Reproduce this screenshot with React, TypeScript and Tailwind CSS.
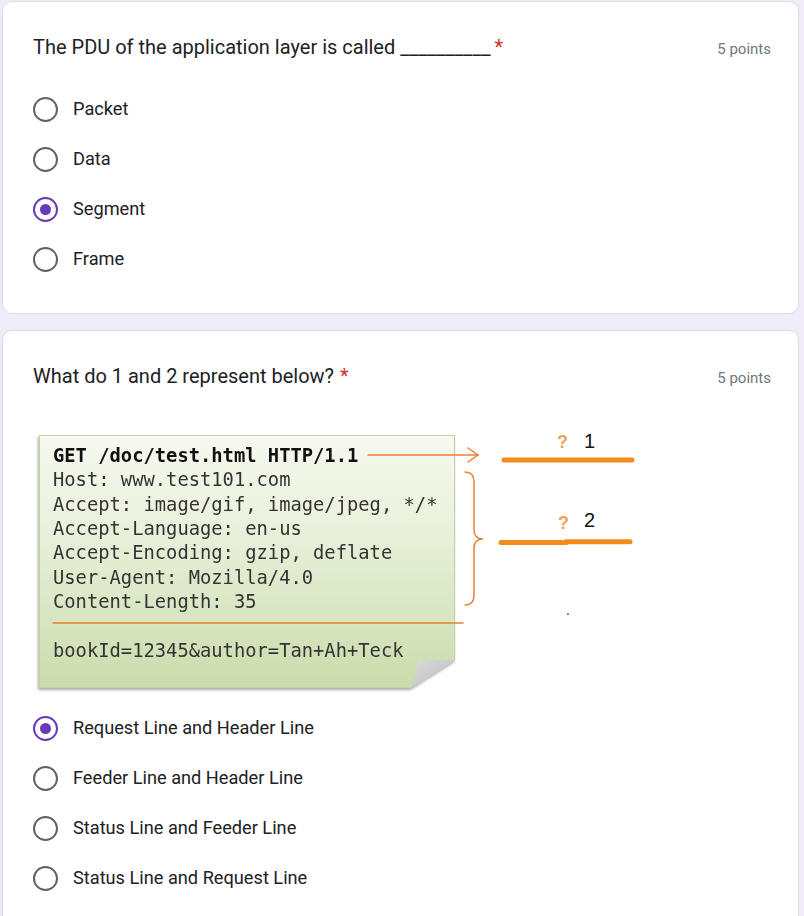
import React from "react";

const PDU_OPTIONS = ["Packet", "Data", "Segment", "Frame"];
const HTTP_OPTIONS = [
  "Request Line and Header Line",
  "Feeder Line and Header Line",
  "Status Line and Feeder Line",
  "Status Line and Request Line",
];

const HEADER_LINES = [
  "Host: www.test101.com",
  "Accept: image/gif, image/jpeg, */*",
  "Accept-Language: en-us",
  "Accept-Encoding: gzip, deflate",
  "User-Agent: Mozilla/4.0",
  "Content-Length: 35",
];

function Radio({ checked }: { checked: boolean }) {
  return (
    <span
      className={`flex h-[25px] w-[25px] shrink-0 items-center justify-center rounded-full border-[2.5px] ${
        checked ? "border-[#673ab7]" : "border-[#5f6368]"
      }`}
    >
      {checked && <span className="h-[11px] w-[11px] rounded-full bg-[#673ab7]" />}
    </span>
  );
}

function Options({ items, selected }: { items: string[]; selected: string }) {
  return (
    <div>
      {items.map((label) => (
        <div key={label} className="flex h-[50px] items-center gap-[15px] text-[18.2px] text-[#202124]">
          <Radio checked={label === selected} />
          <span>{label}</span>
        </div>
      ))}
    </div>
  );
}

function Header({ title, starGap }: { title: string; starGap: string }) {
  return (
    <div className="flex items-baseline justify-between">
      <h2 className="text-[20px] leading-[30px] text-[#202124]">
        {title}
        <span className={`${starGap} text-[#d93025]`}>*</span>
      </h2>
      <span className="text-[15px] text-[#70757a]">5 points</span>
    </div>
  );
}

// HTTP request sticky note with the "? 1" / "? 2" blanks
function RequestFigure() {
  return (
    <div className="relative mt-[29px] h-[275px] w-[610px] pl-[6px] pt-[15px]">
      <div className="relative h-[253px] w-[416px] [filter:drop-shadow(-1px_2px_1.5px_rgba(60,70,40,0.45))]">
        <div className="h-full w-full border border-[#c3d3a6] bg-[linear-gradient(180deg,#f6f9ef_0%,#e8f0d9_40%,#d6e4bf_75%,#cbdcab_100%)] pl-[13px] pt-[8px] font-['DejaVu_Sans_Mono',monospace] text-[18.8px] leading-[24.33px] text-[#333] [clip-path:polygon(0_0,100%_0,100%_225px,372px_253px,0_253px)]">
          <div className="font-bold text-[#111]">GET /doc/test.html HTTP/1.1</div>
          {HEADER_LINES.map((l) => (
            <div key={l} className="whitespace-pre">{l}</div>
          ))}
          <div className="mt-[24.5px]">bookId=12345&amp;author=Tan+Ah+Teck</div>
        </div>
        <svg className="absolute left-0 top-0" width="416" height="253">
          <defs>
            <linearGradient id="fold" x1="0" y1="0" x2="1" y2="1">
              <stop offset="0" stopColor="#dcdcdc" />
              <stop offset="1" stopColor="#b9b9b9" />
            </linearGradient>
          </defs>
          <polygon points="380,225 416,225 372,253" fill="url(#fold)" />
        </svg>
      </div>

      <svg className="pointer-events-none absolute left-0 top-0" width="610" height="275">
        <g stroke="#ea8035" strokeWidth="1.5" fill="none" strokeLinecap="round">
          <line x1="335" y1="35" x2="445" y2="35" />
          <polyline points="435,28 445,35 435,42" />
          <path d="M432,52 Q441,52 441,62 L441,110 Q441,119 450,119 Q441,119 441,128 L441,175 Q441,185 432,185" />
          <line x1="20" y1="203" x2="430" y2="203" />
        </g>
        <g stroke="#f28c1c" strokeWidth="5" strokeLinecap="round">
          <line x1="471" y1="40" x2="599" y2="40" />
          <line x1="468" y1="122.6" x2="533" y2="122.6" />
          <line x1="533" y1="121.8" x2="597" y2="121.8" />
        </g>
        <g fontFamily="'Liberation Sans', Arial, sans-serif">
          <text x="524" y="28" fontSize="18" fontWeight="bold" fill="#f2a157">?</text>
          <text x="551" y="28" fontSize="20" fill="#111">1</text>
          <text x="525" y="109" fontSize="18" fontWeight="bold" fill="#f2a157">?</text>
          <text x="551" y="107" fontSize="20" fill="#111">2</text>
        </g>
        <circle cx="535" cy="194" r="0.9" fill="#555" />
      </svg>
    </div>
  );
}

export default function App() {
  return (
    <div className="min-h-[916px] bg-[#f0ebf8] pt-px font-['Roboto','Liberation_Sans',sans-serif]">
      <div className="ml-[2px] w-[797px] rounded-[10px] border border-[#dadce0] bg-white pb-[29px] pl-[30px] pr-[27px] pt-[30px]">
        <Header title="The PDU of the application layer is called __________" starGap="ml-[4px]" />
        <div className="mt-[22px]">
          <Options items={PDU_OPTIONS} selected="Segment" />
        </div>
      </div>

      <div className="ml-[2px] mt-[16px] w-[797px] rounded-[10px] border border-[#dadce0] bg-white pb-[29px] pl-[30px] pr-[27px] pt-[30px]">
        <Header title="What do 1 and 2 represent below?" starGap="ml-[6px]" />
        <RequestFigure />
        <div className="mt-[8px]">
          <Options items={HTTP_OPTIONS} selected="Request Line and Header Line" />
        </div>
      </div>
    </div>
  );
}
